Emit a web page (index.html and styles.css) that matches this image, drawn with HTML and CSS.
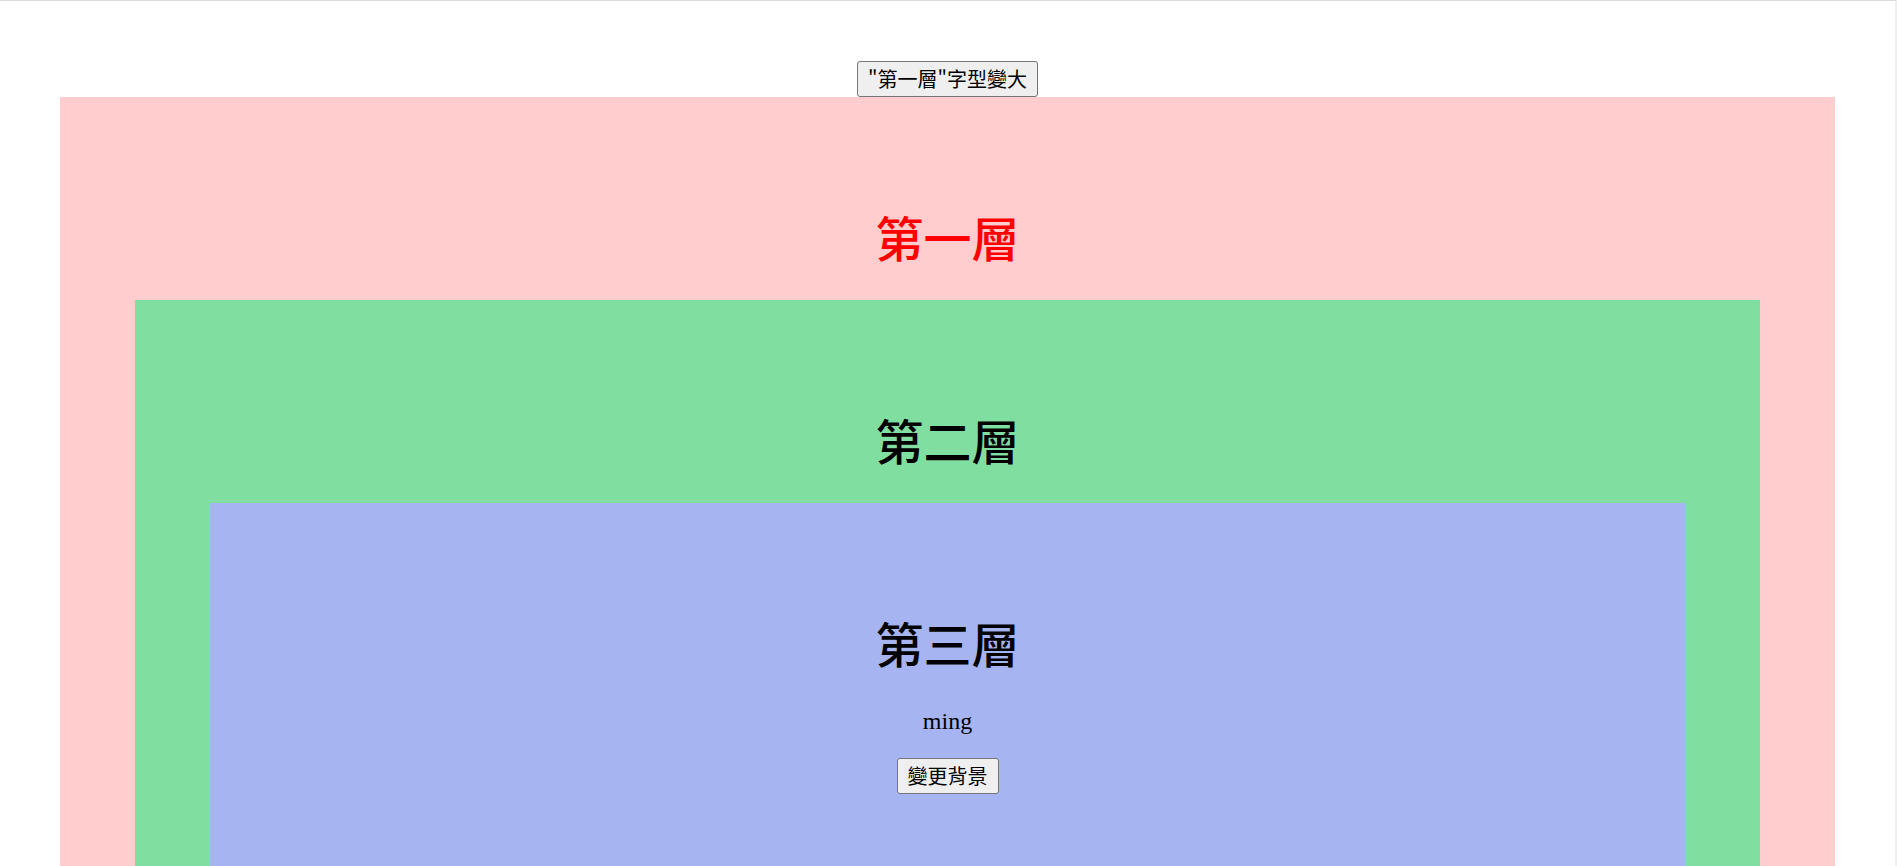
FILE: index.html
```html
<!DOCTYPE html>
<html lang="zh-Hant">
<head>
<meta charset="utf-8">
<title>Layers</title>
<link rel="stylesheet" href="styles.css">
</head>
<body>
<div class="page">
  <div class="toolbar">
    <button class="btn">"第一層"字型變大</button>
  </div>
  <div class="layer layer-1">
    <h1 class="title title-red">第一層</h1>
    <div class="layer layer-2">
      <h1 class="title">第二層</h1>
      <div class="layer layer-3">
        <h1 class="title">第三層</h1>
        <p class="name">ming</p>
        <button class="btn">變更背景</button>
        <div class="spacer"></div>
      </div>
    </div>
  </div>
</div>
</body>
</html>
```

FILE: styles.css
```css
html, body {
  margin: 0;
  padding: 0;
  background: #ffffff;
}

body {
  border-top: 1px solid #dadada;
  border-right: 2px solid #efefef;
  min-height: 900px;
}

.page {
  padding: 0 60px;
}

.toolbar {
  display: flex;
  justify-content: center;
  padding-top: 60px;
}

.btn {
  font-family: "Noto Sans CJK TC", "Noto Sans", sans-serif;
  font-size: 20px;
  line-height: 24px;
  height: 36px;
  padding: 0 10px;
  color: #000;
  background: #efefef;
  border: 1px solid #767676;
  border-radius: 3px;
}

.layer {
  padding: 75px 75px 0;
  text-align: center;
}

.layer-1 {
  margin-top: 0;
  background: #ffcdce;
}

.layer-2 {
  background: #80dfa0;
}

.layer-3 {
  background: #a6b5f2;
}

.title {
  margin: 32px 0;
  font-family: "Noto Sans CJK TC", "Noto Sans", sans-serif;
  font-size: 48px;
  line-height: 64px;
  font-weight: 500;
  color: #000;
}

.title-red {
  color: #ff0000;
}

.name {
  margin: 33px 0 23px;
  font-family: "Liberation Serif", serif;
  font-size: 24px;
  line-height: 28px;
  color: #000;
}

.spacer {
  height: 120px;
}
```
